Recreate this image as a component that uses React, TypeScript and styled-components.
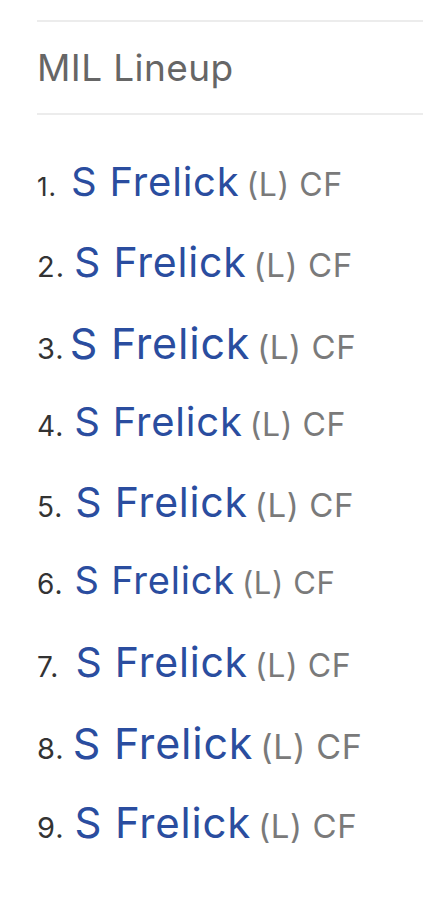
import React from 'react';
import styled, { createGlobalStyle } from 'styled-components';

const GlobalStyle = createGlobalStyle`
  body {
    margin: 0;
    background: #ffffff;
    font-family: Inter, "Liberation Sans", sans-serif;
  }
`;

const Panel = styled.section`
  padding: 20px 0 0 37px;
`;

const Header = styled.div`
  border-top: 2px solid #ececec;
  border-bottom: 2px solid #ececec;
  height: 91px;
  display: flex;
  align-items: center;
`;

const Title = styled.h2`
  margin: 0;
  font-size: 37px;
  font-weight: 400;
  color: #666666;
  letter-spacing: 0.4px;
`;

const List = styled.ol`
  list-style: none;
  margin: 0;
  padding: 42px 0 0 0;
`;

const Row = styled.li`
  height: 80px;
  display: flex;
  align-items: baseline;
  white-space: nowrap;
`;

const Num = styled.span<{ $size: number; $gap: number }>`
  font-size: ${(p) => p.$size}px;
  color: #333333;
  letter-spacing: 1px;
  margin-right: ${(p) => p.$gap}px;
`;

const Name = styled.a<{ $size: number }>`
  font-size: ${(p) => p.$size}px;
  color: #2a4d9f;
  text-decoration: none;
  letter-spacing: 0.8px;
  margin-right: 7px;
`;

const Meta = styled.span<{ $size: number }>`
  font-size: ${(p) => p.$size}px;
  color: #7a7a7a;
  letter-spacing: 0.6px;
`;

const lineup = [
  { n: 1, num: 26, gap: 14, name: 40, meta: 32 },
  { n: 2, num: 29, gap: 9, name: 41, meta: 33 },
  { n: 3, num: 29, gap: 5, name: 43, meta: 33 },
  { n: 4, num: 28, gap: 10, name: 40, meta: 32 },
  { n: 5, num: 28, gap: 12, name: 41, meta: 33 },
  { n: 6, num: 28, gap: 11, name: 38, meta: 31 },
  { n: 7, num: 28, gap: 16, name: 41, meta: 32 },
  { n: 8, num: 29, gap: 8, name: 43, meta: 34 },
  { n: 9, num: 29, gap: 10, name: 42, meta: 33 },
];

export default function App() {
  return (
    <>
      <GlobalStyle />
      <Panel>
        <Header>
          <Title>MIL Lineup</Title>
        </Header>
        <List>
          {lineup.map((p) => (
            <Row key={p.n}>
              <Num $size={p.num} $gap={p.gap}>{p.n}.</Num>
              <Name href="#" $size={p.name}>S Frelick</Name>
              <Meta $size={p.meta}>(L) CF</Meta>
            </Row>
          ))}
        </List>
      </Panel>
    </>
  );
}
